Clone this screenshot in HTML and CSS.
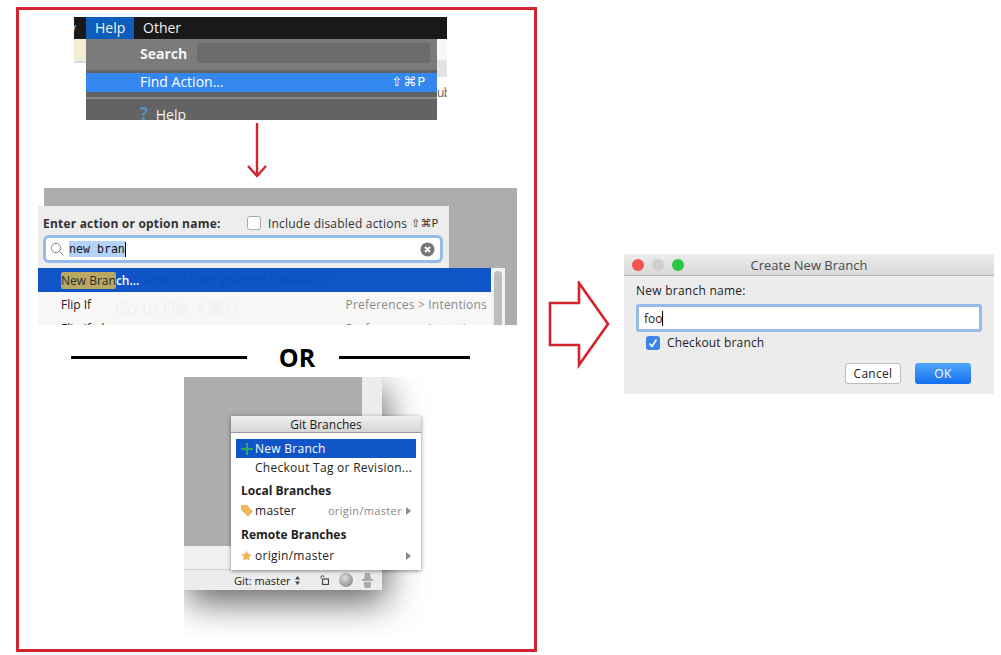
FILE: index.html
```html
<!DOCTYPE html>
<html lang="en">

<head>
    <meta charset="UTF-8">
    <title>Create New Branch</title>
    <link rel="stylesheet" href="styles.css">
</head>

<body>
    <div class="canvas">
        <div class="red_frame"></div>

        <!-- help menu -->
        <div class="shot menu_shot">
            <div class="menu_bar">
                <span class="menu_cut">y</span>
                <span class="menu_tab active">Help</span>
                <span class="menu_tab">Other</span>
            </div>
            <div class="menu_body">
                <div class="menu_side"></div>
                <div class="menu_drop">
                    <div class="menu_search">
                        <b>Search</b>
                        <div class="menu_input"></div>
                    </div>
                    <div class="menu_item">
                        <span>Find Action...</span>
                        <span class="menu_key">⇧⌘P</span>
                    </div>
                    <div class="menu_sep"></div>
                    <div class="menu_help"><b>?</b> Help</div>
                </div>
                <div class="menu_right">ub</div>
            </div>
        </div>

        <svg class="arrow_down" width="24" height="58" viewBox="0 0 24 58">
            <path d="M12 1V54M3 44L12 54L21 44" fill="none" stroke="#d2232f" stroke-width="2.4"/>
        </svg>

        <!-- find action -->
        <div class="shot action_shot">
            <div class="action_panel">
                <div class="action_head">
                    <b>Enter action or option name:</b>
                    <span class="action_check"></span>
                    <span class="action_label">Include disabled actions</span>
                    <span class="action_key">⇧⌘P</span>
                </div>
                <div class="action_input">
                    <svg width="15" height="15" viewBox="0 0 15 15">
                        <circle cx="6" cy="6" r="4.7" fill="none" stroke="#888" stroke-width="1"/>
                        <path d="M9.5 9.5L13.5 13.5" stroke="#888" stroke-width="1"/>
                    </svg>
                    <span class="action_text">new bran</span>
                    <span class="caret"></span>
                    <span class="action_clear">
                        <svg width="15" height="15" viewBox="0 0 15 15">
                            <circle cx="7.5" cy="7.5" r="7" fill="#777"/>
                            <path d="M5 5L10 10M10 5L5 10" stroke="#fff" stroke-width="1.8"/>
                        </svg>
                    </span>
                </div>
            </div>
            <div class="action_list">
                <div class="action_rows">
                    <div class="action_row selected"><span><span class="mark">New Bran</span>ch...</span></div>
                    <div class="action_row"><span>Flip If</span><span class="muted">Preferences &gt; Intentions</span></div>
                    <div class="action_row"><span>Flip if-else</span><span class="muted">Preferences &gt; Intentions</span></div>
                </div>
                <div class="action_scroll"><div class="action_thumb"></div></div>
                <div class="action_ghost">Go to File ⇧⌘O</div>
                <div class="action_ghost top">Search Everywhere Double ⇧</div>
            </div>
        </div>

        <div class="or_row">
            <span class="or_line left"></span>
            <span class="or_text">OR</span>
            <span class="or_line right"></span>
        </div>

        <!-- git branches popup -->
        <div class="shot git_shot">
            <div class="git_window">
                <div class="git_top">
                    <div class="git_grey"></div>
                    <div class="git_gutter"></div>
                </div>
                <div class="git_strip"></div>
                <div class="git_status">
                    <span>Git: master</span>
                    <svg class="git_updown" width="5" height="9" viewBox="0 0 5 9">
                        <path d="M2.5 0L5 3.5H0ZM2.5 9L0 5.5H5Z" fill="#444"/>
                    </svg>
                    <svg class="git_lock" width="9" height="10" viewBox="0 0 9 10">
                        <path d="M1 3.5V2.2A1.5 1.5 0 0 1 4 2.2" fill="none" stroke="#444" stroke-width="1"/>
                        <rect x="2.5" y="4" width="6" height="5.5" fill="none" stroke="#444" stroke-width="1.2"/>
                    </svg>
                    <span class="git_ball"></span>
                    <svg width="11" height="15" viewBox="0 0 11 15">
                        <path d="M3 0H8L9 6H11V8H0V6H2ZM2 9H9V13L8 15H3L2 13Z" fill="#aaa"/>
                    </svg>
                </div>
            </div>
        </div>
        <div class="git_popup">
            <div class="git_title">Git Branches</div>
            <div class="git_list">
                <div class="git_row selected">
                    <svg class="git_icon" width="14" height="14" viewBox="0 0 14 14">
                        <path d="M7 1V13M1 7H13" stroke="#2fa66a" stroke-width="2"/>
                    </svg>
                    <span>New Branch</span>
                </div>
                <div class="git_row"><span class="git_icon"></span><span>Checkout Tag or Revision...</span></div>
                <div class="git_group">Local Branches</div>
                <div class="git_row">
                    <svg class="git_icon" width="14" height="14" viewBox="0 0 14 14">
                        <path d="M1 1H7L13 7.5L8 12.5L1 6Z" fill="#f0b65a"/>
                    </svg>
                    <span>master</span>
                    <span class="git_remote">origin/master</span>
                    <span class="git_more"></span>
                </div>
                <div class="git_group second">Remote Branches</div>
                <div class="git_row">
                    <svg class="git_icon" width="14" height="14" viewBox="0 0 14 14">
                        <path d="M6.5 1.5L8.1 5L12 5.4L9.1 8L9.9 11.8L6.5 9.9L3.1 11.8L3.9 8L1 5.4L4.9 5Z" fill="#f0b65a"/>
                    </svg>
                    <span>origin/master</span>
                    <span class="git_remote"></span>
                    <span class="git_more"></span>
                </div>
            </div>
        </div>

        <svg class="arrow_right" width="64" height="88" viewBox="0 0 64 88">
            <path d="M2 22H31V2L60 43L31 84V64H2Z" fill="none" stroke="#d2232f" stroke-width="2.6"/>
        </svg>

        <!-- new branch dialog -->
        <div class="shot dialog">
            <div class="dialog_title">
                <div class="lights">
                    <span class="light red"></span>
                    <span class="light grey"></span>
                    <span class="light green"></span>
                </div>
                <span class="dialog_name">Create New Branch</span>
            </div>
            <div class="dialog_body">
                <div class="dialog_label">New branch name:</div>
                <div class="dialog_input"><span>foo</span><span class="caret"></span></div>
                <div class="dialog_check">
                    <span class="check_box">
                        <svg width="10" height="10" viewBox="0 0 10 10">
                            <path d="M1.5 5.5L4 8.5L8.5 1.5" fill="none" stroke="#fff" stroke-width="1.5"/>
                        </svg>
                    </span>
                    <span>Checkout branch</span>
                </div>
                <div class="dialog_buttons">
                    <button class="btn_cancel">Cancel</button>
                    <button class="btn_ok">OK</button>
                </div>
            </div>
        </div>
    </div>
</body>

</html>
```

FILE: styles.css
```css
* {
    box-sizing: border-box;
}

body {
    margin: 0;
    background-color: #fff;
    font-family: "Open Sans", "Liberation Sans", sans-serif;
    font-size: 12px;
    color: #222;
}

.canvas {
    position: relative;
    width: 1001px;
    height: 655px;
    overflow: hidden;
}

.shot {
    position: absolute;
    overflow: hidden;
}

.red_frame {
    position: absolute;
    left: 16px;
    top: 7px;
    width: 521px;
    height: 645px;
    border: 3px solid #d2232f;
}

/* help menu */
.menu_shot {
    left: 74px;
    top: 17px;
    width: 373px;
    height: 103px;
    background-color: #fff;
}

.menu_bar {
    display: flex;
    height: 22px;
    background-color: #191919;
    color: #f2f2f2;
    font-size: 14px;
    line-height: 22px;
}

.menu_cut {
    width: 12px;
    overflow: hidden;
    text-indent: -5px;
    color: #bbb;
}

.menu_tab {
    padding: 0 9px;
}

.menu_tab.active {
    width: 48px;
    background-color: #0e5dba;
}

.menu_body {
    display: flex;
    height: 81px;
}

.menu_side {
    flex: none;
    width: 12px;
    background: linear-gradient(#f3ecd6 0, #f3ecd6 22px, #dcdcdc 22px, #dcdcdc 24px, #fff 24px);
}

.menu_drop {
    flex: none;
    width: 351px;
    background-color: #636363;
    color: #f4f4f4;
    font-size: 14px;
}

.menu_search {
    display: flex;
    align-items: center;
    height: 31px;
    padding: 0 7px 3px 54px;
    background-color: #7b7b7b;
}

.menu_search b {
    width: 57px;
}

.menu_input {
    flex: 1;
    height: 20px;
    background-color: #6c6c6c;
    border-radius: 2px;
}

.menu_item {
    display: flex;
    justify-content: space-between;
    align-items: center;
    height: 19px;
    margin-top: 3px;
    padding: 0 11px 2px 54px;
    background-color: #3487ee;
    color: #fff;
}

.menu_key {
    font-family: "DejaVu Sans", sans-serif;
    font-size: 13px;
    letter-spacing: 1px;
}

.menu_sep {
    height: 2px;
    margin-top: 5px;
    background-color: #8a8a8a;
}

.menu_help {
    padding: 5px 0 0 54px;
    line-height: 20px;
}

.menu_help b {
    margin-right: 4px;
    color: #4d94c4;
    font-size: 17px;
}

.menu_right {
    flex: none;
    width: 10px;
    overflow: hidden;
    padding-top: 45px;
    color: #666;
    font-size: 12px;
    letter-spacing: -.5px;
    background: linear-gradient(#f7f7f7 0, #f7f7f7 21px, #e4e4e4 21px, #e4e4e4 38px, #fff 38px);
}

.arrow_down {
    position: absolute;
    left: 245px;
    top: 122px;
}

/* find action */
.action_shot {
    left: 38px;
    top: 188px;
    width: 479px;
    height: 137px;
    background: linear-gradient(to right, #fff 6px, #adadad 6px);
}

.action_panel {
    width: 411px;
    height: 62px;
    margin-top: 18px;
    padding: 0 5px;
    background-color: #ededed;
}

.action_head {
    display: flex;
    align-items: center;
    height: 34px;
    font-size: 12px;
    letter-spacing: .2px;
    color: #333;
}

.action_head b {
    width: 204px;
    white-space: nowrap;
}

.action_check {
    width: 14px;
    height: 14px;
    margin-right: 7px;
    background-color: #fff;
    border: 1px solid #aaa;
    border-radius: 3px;
}

.action_label {
    width: 143px;
    white-space: nowrap;
}

.action_key {
    font-family: "DejaVu Sans", sans-serif;
    font-size: 11px;
    white-space: nowrap;
}

.action_input {
    display: flex;
    align-items: center;
    width: 400px;
    height: 28px;
    margin-top: -5px;
    padding: 0 5px 0 4px;
    background-color: #fff;
    border: 3px solid #93bcec;
    border-radius: 6px;
    font-family: "DejaVu Sans Mono", monospace;
    font-size: 11.6px;
}

.action_text {
    margin-left: 4px;
    padding: 1px 0;
    background-color: #b3d3fb;
    color: #111;
}

.caret {
    width: 1px;
    height: 15px;
    background-color: #000;
}

.action_clear {
    display: flex;
    margin-left: auto;
}

.action_list {
    position: relative;
    display: flex;
    width: 467px;
    height: 57px;
    background-color: #f7f7f7;
}

.action_rows {
    width: 453px;
}

.action_row {
    display: flex;
    justify-content: space-between;
    align-items: center;
    height: 24px;
    padding: 0 4px 0 23px;
    font-size: 12px;
    white-space: nowrap;
}

.action_row.selected {
    background-color: #0f55c8;
    color: #fff;
    font-weight: 600;
}

.mark {
    background-color: #b9a862;
    color: #2c2c2c;
    font-weight: 400;
    border-radius: 2px;
}

.muted {
    color: #8a8a8a;
    letter-spacing: .2px;
}

.action_scroll {
    width: 14px;
    padding: 3px 3px 0;
    background-color: #f2f2f2;
}

.action_thumb {
    width: 8px;
    height: 60px;
    background-color: #bdbdbd;
    border-radius: 4px;
}

.action_ghost {
    position: absolute;
    left: 77px;
    top: 28px;
    color: #f0f0f0;
    font-size: 17px;
    white-space: nowrap;
}

.action_ghost.top {
    left: 104px;
    top: 1px;
    color: #0e4fba;
    font-size: 14px;
}

/* or divider */
.or_row {
    position: absolute;
    left: 71px;
    top: 340px;
    display: flex;
    align-items: center;
    width: 399px;
    height: 34px;
}

.or_line {
    height: 3px;
    background-color: #000;
}

.or_line.left {
    width: 176px;
}

.or_line.right {
    width: 131px;
}

.or_text {
    width: 92px;
    padding-left: 8px;
    color: #000;
    font-size: 25px;
    font-weight: 700;
    text-align: center;
}

/* git branches */
.git_shot {
    left: 184px;
    top: 377px;
    width: 247px;
    height: 259px;
    background-color: #fff;
}

.git_window {
    width: 198px;
    height: 213px;
    box-shadow: 4px 12px 34px rgb(0 0 0 / 62%);
}

.git_top {
    display: flex;
    height: 169px;
}

.git_grey {
    width: 178px;
    background-color: #adadad;
}

.git_gutter {
    width: 20px;
    background-color: #ececec;
}

.git_strip {
    height: 24px;
    background-color: #f1f1f1;
    border-bottom: 1px solid #cfcfcf;
}

.git_status {
    display: flex;
    align-items: center;
    height: 20px;
    padding-left: 50px;
    background-color: #ececec;
    font-size: 11px;
    white-space: nowrap;
}

.git_updown {
    margin-left: 4px;
}

.git_lock {
    margin-left: 20px;
}

.git_ball {
    width: 14px;
    height: 14px;
    margin: 0 9px 0 10px;
    background: radial-gradient(circle at 40% 35%, #ddd, #777);
    border-radius: 50%;
}

.git_popup {
    position: absolute;
    left: 231px;
    top: 416px;
    width: 190px;
    height: 154px;
    background-color: #fff;
    box-shadow: 0 1px 4px rgb(0 0 0 / 45%);
}

.git_title {
    height: 17px;
    background: linear-gradient(#f0f0f0, #d6d6d6);
    border-bottom: 1px solid #999;
    font-size: 12px;
    line-height: 17px;
    text-align: center;
}

.git_list {
    padding: 6px 5px 0;
    font-size: 12px;
}

.git_row {
    display: flex;
    align-items: center;
    height: 19px;
    letter-spacing: .27px;
    white-space: nowrap;
}

.git_row.selected {
    background-color: #0f55c8;
    color: #fff;
}

.git_icon {
    flex: none;
    width: 14px;
    height: 14px;
    margin: 0 1px 0 4px;
}

.git_group {
    padding: 5px 0 0 5px;
    height: 24px;
    font-weight: 700;
}

.git_group.second {
    height: 26px;
    padding-top: 6px;
}

.git_remote {
    margin-left: auto;
    color: #888;
    font-size: 11px;
    letter-spacing: .35px;
}

.git_more {
    width: 0;
    height: 0;
    margin: 0 5px 0 4px;
    border-left: 5px solid #888;
    border-top: 4px solid transparent;
    border-bottom: 4px solid transparent;
}

.arrow_right {
    position: absolute;
    left: 548px;
    top: 281px;
}

/* dialog */
.dialog {
    left: 624px;
    top: 254px;
    width: 370px;
    height: 140px;
    background-color: #ececec;
}

.dialog_title {
    position: relative;
    height: 22px;
    background: linear-gradient(#ececec, #d9d9d9);
    border-bottom: 1px solid #b6b6b6;
    font-size: 13px;
    text-align: center;
    line-height: 23px;
    color: #4a4a4a;
}

.lights {
    position: absolute;
    left: 8px;
    top: 5px;
    display: flex;
    gap: 8px;
}

.light {
    width: 12px;
    height: 12px;
    border-radius: 50%;
}

.light.red {
    background-color: #f4544f;
}

.light.grey {
    background-color: #cfcfcf;
}

.light.green {
    background-color: #2bc83f;
}

.dialog_body {
    padding: 0 12px 0 12px;
}

.dialog_label {
    height: 28px;
    line-height: 30px;
    letter-spacing: .25px;
}

.dialog_input {
    display: flex;
    align-items: center;
    width: 346px;
    height: 28px;
    padding-left: 5px;
    background-color: #fff;
    border: 3px solid #93bcec;
    border-radius: 3px;
}

.dialog_check {
    display: flex;
    align-items: center;
    gap: 7px;
    height: 21px;
    padding-left: 10px;
    letter-spacing: .15px;
}

.check_box {
    display: flex;
    align-items: center;
    justify-content: center;
    width: 14px;
    height: 14px;
    background-color: #3d85e4;
    border-radius: 3px;
}

.dialog_buttons {
    display: flex;
    justify-content: flex-end;
    gap: 14px;
    padding: 10px 11px 0 0;
}

.dialog_buttons button {
    height: 21px;
    padding: 0;
    font-family: inherit;
    font-size: 12px;
    letter-spacing: .3px;
    border-radius: 3px;
}

.btn_cancel {
    width: 56px;
    background-color: #fff;
    border: 1px solid #bbb;
    color: #222;
}

.btn_ok {
    width: 56px;
    background: linear-gradient(#51a5fb, #1270f0);
    border: none;
    color: #fff;
}
```
